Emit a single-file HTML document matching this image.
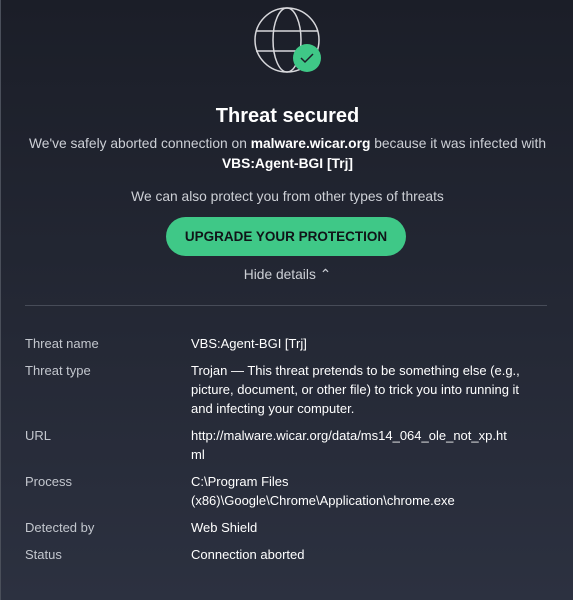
<!DOCTYPE html>
<html><head><meta charset="utf-8"><style>
html,body{margin:0;padding:0}
body{width:573px;height:600px;overflow:hidden;background:linear-gradient(#1b1e28,#2c3140);font-family:"Liberation Sans",sans-serif;color:#fff;position:relative;border-left:1px solid #4a4f5a;box-sizing:border-box}
.c{position:absolute;left:0;width:573px;text-align:center}
.t{font-size:13.8px;color:#cdd0d6}
.t b{color:#fff}
.btn{position:absolute;left:165px;top:217px;width:240px;height:39px;border-radius:20px;background:#3fc887;color:#101418;font-weight:bold;font-size:13.5px;line-height:39px;text-align:center}
.hr{position:absolute;left:24px;width:522px;top:305px;height:1px;background:#474c58}
.l{position:absolute;left:24px;font-size:13px;color:#c3c7ce;line-height:19px}
.v{position:absolute;left:190px;width:348px;font-size:13px;color:#fff;line-height:19px}
</style></head><body>
<svg style="position:absolute;left:-1px;top:0" width="573" height="80">
<g fill="none" stroke="#d8d8dc" stroke-width="1.5">
<circle cx="287" cy="40" r="32"/>
<ellipse cx="287" cy="40" rx="14" ry="32"/>
<line x1="256" y1="31" x2="318" y2="31"/>
<line x1="256" y1="51" x2="318" y2="51"/>
</g>
<circle cx="307" cy="58" r="14" fill="#3fc887"/>
<path d="M301 58 l4 4 l8 -8" fill="none" stroke="#1b1e28" stroke-width="1.5"/>
</svg>
<div class="c" style="top:105px;font-size:20px;font-weight:bold">Threat secured</div>
<div class="c t" style="top:136px">We've safely aborted connection on <b>malware.wicar.org</b> because it was infected with</div>
<div class="c t" style="top:156px"><b>VBS:Agent-BGI [Trj]</b></div>
<div class="c t" style="top:189px">We can also protect you from other types of threats</div>
<div class="btn">UPGRADE YOUR PROTECTION</div>
<div class="c t" style="top:267px">Hide details &#8963;</div>
<div class="hr"></div>
<div class="l" style="top:334px">Threat name</div><div class="v" style="top:334px">VBS:Agent-BGI [Trj]</div>
<div class="l" style="top:361px">Threat type</div><div class="v" style="top:361px">Trojan — This threat pretends to be something else (e.g.,<br>picture, document, or other file) to trick you into running it<br>and infecting your computer.</div>
<div class="l" style="top:426px">URL</div><div class="v" style="top:426px">http://malware.wicar.org/data/ms14_064_ole_not_xp.ht<br>ml</div>
<div class="l" style="top:472px">Process</div><div class="v" style="top:472px">C:\Program Files<br>(x86)\Google\Chrome\Application\chrome.exe</div>
<div class="l" style="top:518px">Detected by</div><div class="v" style="top:518px">Web Shield</div>
<div class="l" style="top:545px">Status</div><div class="v" style="top:545px">Connection aborted</div>
</body></html>
